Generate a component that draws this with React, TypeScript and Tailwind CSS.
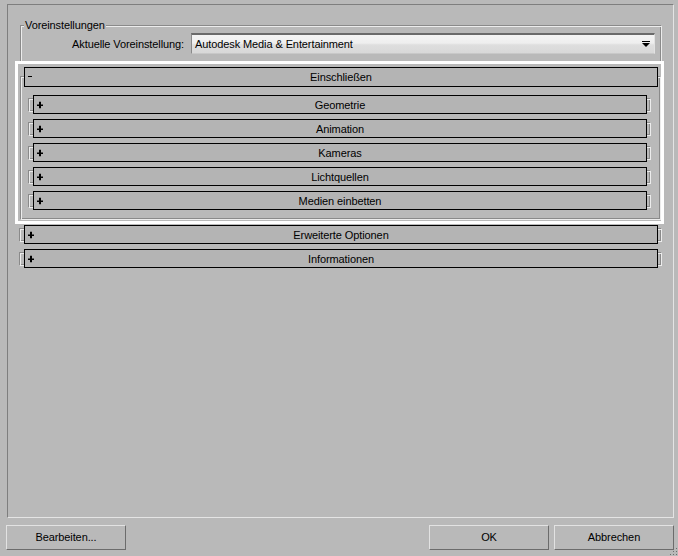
import React from "react";

const etched =
  "border border-t-[#8a8a8a] border-l-[#8a8a8a] border-b-[#ececec] border-r-[#ececec] shadow-[inset_1px_1px_0_#ececec,inset_-1px_-1px_0_#8a8a8a]";

function Plus() {
  return (
    <svg width="6" height="7" viewBox="0 0 6 7" className="absolute left-[3px] top-1/2 -translate-y-1/2">
      <rect x="2" y="0" width="2" height="7" fill="#000" />
      <rect x="0" y="3" width="6" height="1.5" fill="#000" />
    </svg>
  );
}

function SubRollout({ label, width, headerWidth }: { label: string; width: string; headerWidth: string }) {
  return (
    <div className={`h-[14px] ${width} ${etched}`}>
      <div
        className={`relative -mt-[4px] ml-[4px] ${headerWidth} h-[19px] border border-black bg-[#b4b4b4] flex items-center justify-center leading-none`}
      >
        <Plus />
        <span className="pt-[2px]">{label}</span>
      </div>
    </div>
  );
}

export default function App() {
  return (
    <div className="relative w-[678px] h-[556px] overflow-hidden bg-[#b9b9b9] text-[11px] text-black tracking-[-0.1px] font-['Liberation_Sans',Arial,sans-serif] flex flex-col">
      {/* Outer panel */}
      <div className="ml-[7px] mt-[4px] w-[667px] h-[514px] border border-t-[#7e7e7e] border-l-[#7e7e7e] border-b-[#e4e4e4] border-r-[#e4e4e4] flex flex-col">
        {/* Group box */}
        <div className="relative ml-[12px] mt-[20px] w-[642px] h-[36px] border-t border-l border-r border-t-[#8a8a8a] border-l-[#8a8a8a] border-r-[#ececec] shadow-[inset_1px_1px_0_#ececec,inset_-1px_0_0_#8a8a8a]">
          <span className="absolute -top-[7px] left-[3px] px-[1px] bg-[#b9b9b9] leading-[13px]">Voreinstellungen</span>
          <div className="mt-[7px] flex items-center">
            <div className="w-[163px] text-right leading-none pt-[1px]">Aktuelle Voreinstellung:</div>
            <div className="ml-[7px] w-[464px] h-[21px] border-t-2 border-l border-t-[#6a6a6a] border-l-[#8a8a8a] border-r border-b border-r-[#e2e2e2] border-b-[#c8c8c8] bg-[linear-gradient(to_bottom,#f4f4f4_0%,#eeeeee_45%,#dedede_55%,#d8d8d8_100%)] flex items-center pl-[3px] pr-[4px]">
              <span className="flex-1 leading-none">Autodesk Media &amp; Entertainment</span>
              <svg width="8" height="6" viewBox="0 0 8 6">
                <rect x="0" y="0" width="8" height="1" fill="#000" />
                <polygon points="0,2 8,2 4,6" fill="#000" />
              </svg>
            </div>
          </div>
        </div>

        {/* Highlighted rollout */}
        <div className="ml-[7px] w-[649px] h-[163px] border-[3px] border-white">
          <div className={`ml-[2px] mt-[12px] w-[641px] h-[144px] ${etched}`}>
            <div className="relative -mt-[10px] ml-[3px] w-[634px] h-[20px] border border-black bg-[#b4b4b4] flex items-center justify-center leading-none">
              <div className="absolute left-[3px] top-[8px] w-[4px] h-[1px] bg-black" />
              <span className="pt-[1px]">Einschließen</span>
            </div>
            <div className="mt-[11px] ml-[7px] flex flex-col gap-[10px]">
              {["Geometrie", "Animation", "Kameras", "Lichtquellen", "Medien einbetten"].map((l) => (
                <SubRollout key={l} label={l} width="w-[623px]" headerWidth="w-[614px]" />
              ))}
            </div>
          </div>
        </div>

        {/* Other rollouts */}
        <div className="ml-[11px] mt-[4px] flex flex-col gap-[10px]">
          {["Erweiterte Optionen", "Informationen"].map((l) => (
            <SubRollout key={l} label={l} width="w-[643px]" headerWidth="w-[634px]" />
          ))}
        </div>
      </div>

      {/* Buttons */}
      <div className="mt-[7px] flex items-start">
        <button className="ml-[6px] w-[120px] h-[25px] border border-t-[#e2e2e2] border-l-[#e2e2e2] border-b-[#6c6c6c] border-r-[#6c6c6c] bg-[#b9b9b9] leading-none">
          Bearbeiten...
        </button>
        <button className="ml-[303px] w-[120px] h-[25px] border border-t-[#e2e2e2] border-l-[#e2e2e2] border-b-[#6c6c6c] border-r-[#6c6c6c] bg-[#b9b9b9] leading-none">
          OK
        </button>
        <button className="ml-[5px] w-[120px] h-[25px] border border-t-[#e2e2e2] border-l-[#e2e2e2] border-b-[#6c6c6c] border-r-[#6c6c6c] bg-[#b9b9b9] leading-none">
          Abbrechen
        </button>
      </div>

      {/* Resize grip */}
      <svg width="8" height="8" viewBox="0 0 8 8" className="absolute right-0 bottom-0">
        <rect x="6" y="0" width="1" height="1" fill="#6c6c6c" />
        <rect x="3" y="3" width="1" height="1" fill="#6c6c6c" />
        <rect x="6" y="3" width="1" height="1" fill="#6c6c6c" />
        <rect x="0" y="6" width="1" height="1" fill="#6c6c6c" />
        <rect x="3" y="6" width="1" height="1" fill="#6c6c6c" />
        <rect x="6" y="6" width="1" height="1" fill="#6c6c6c" />
      </svg>
    </div>
  );
}
